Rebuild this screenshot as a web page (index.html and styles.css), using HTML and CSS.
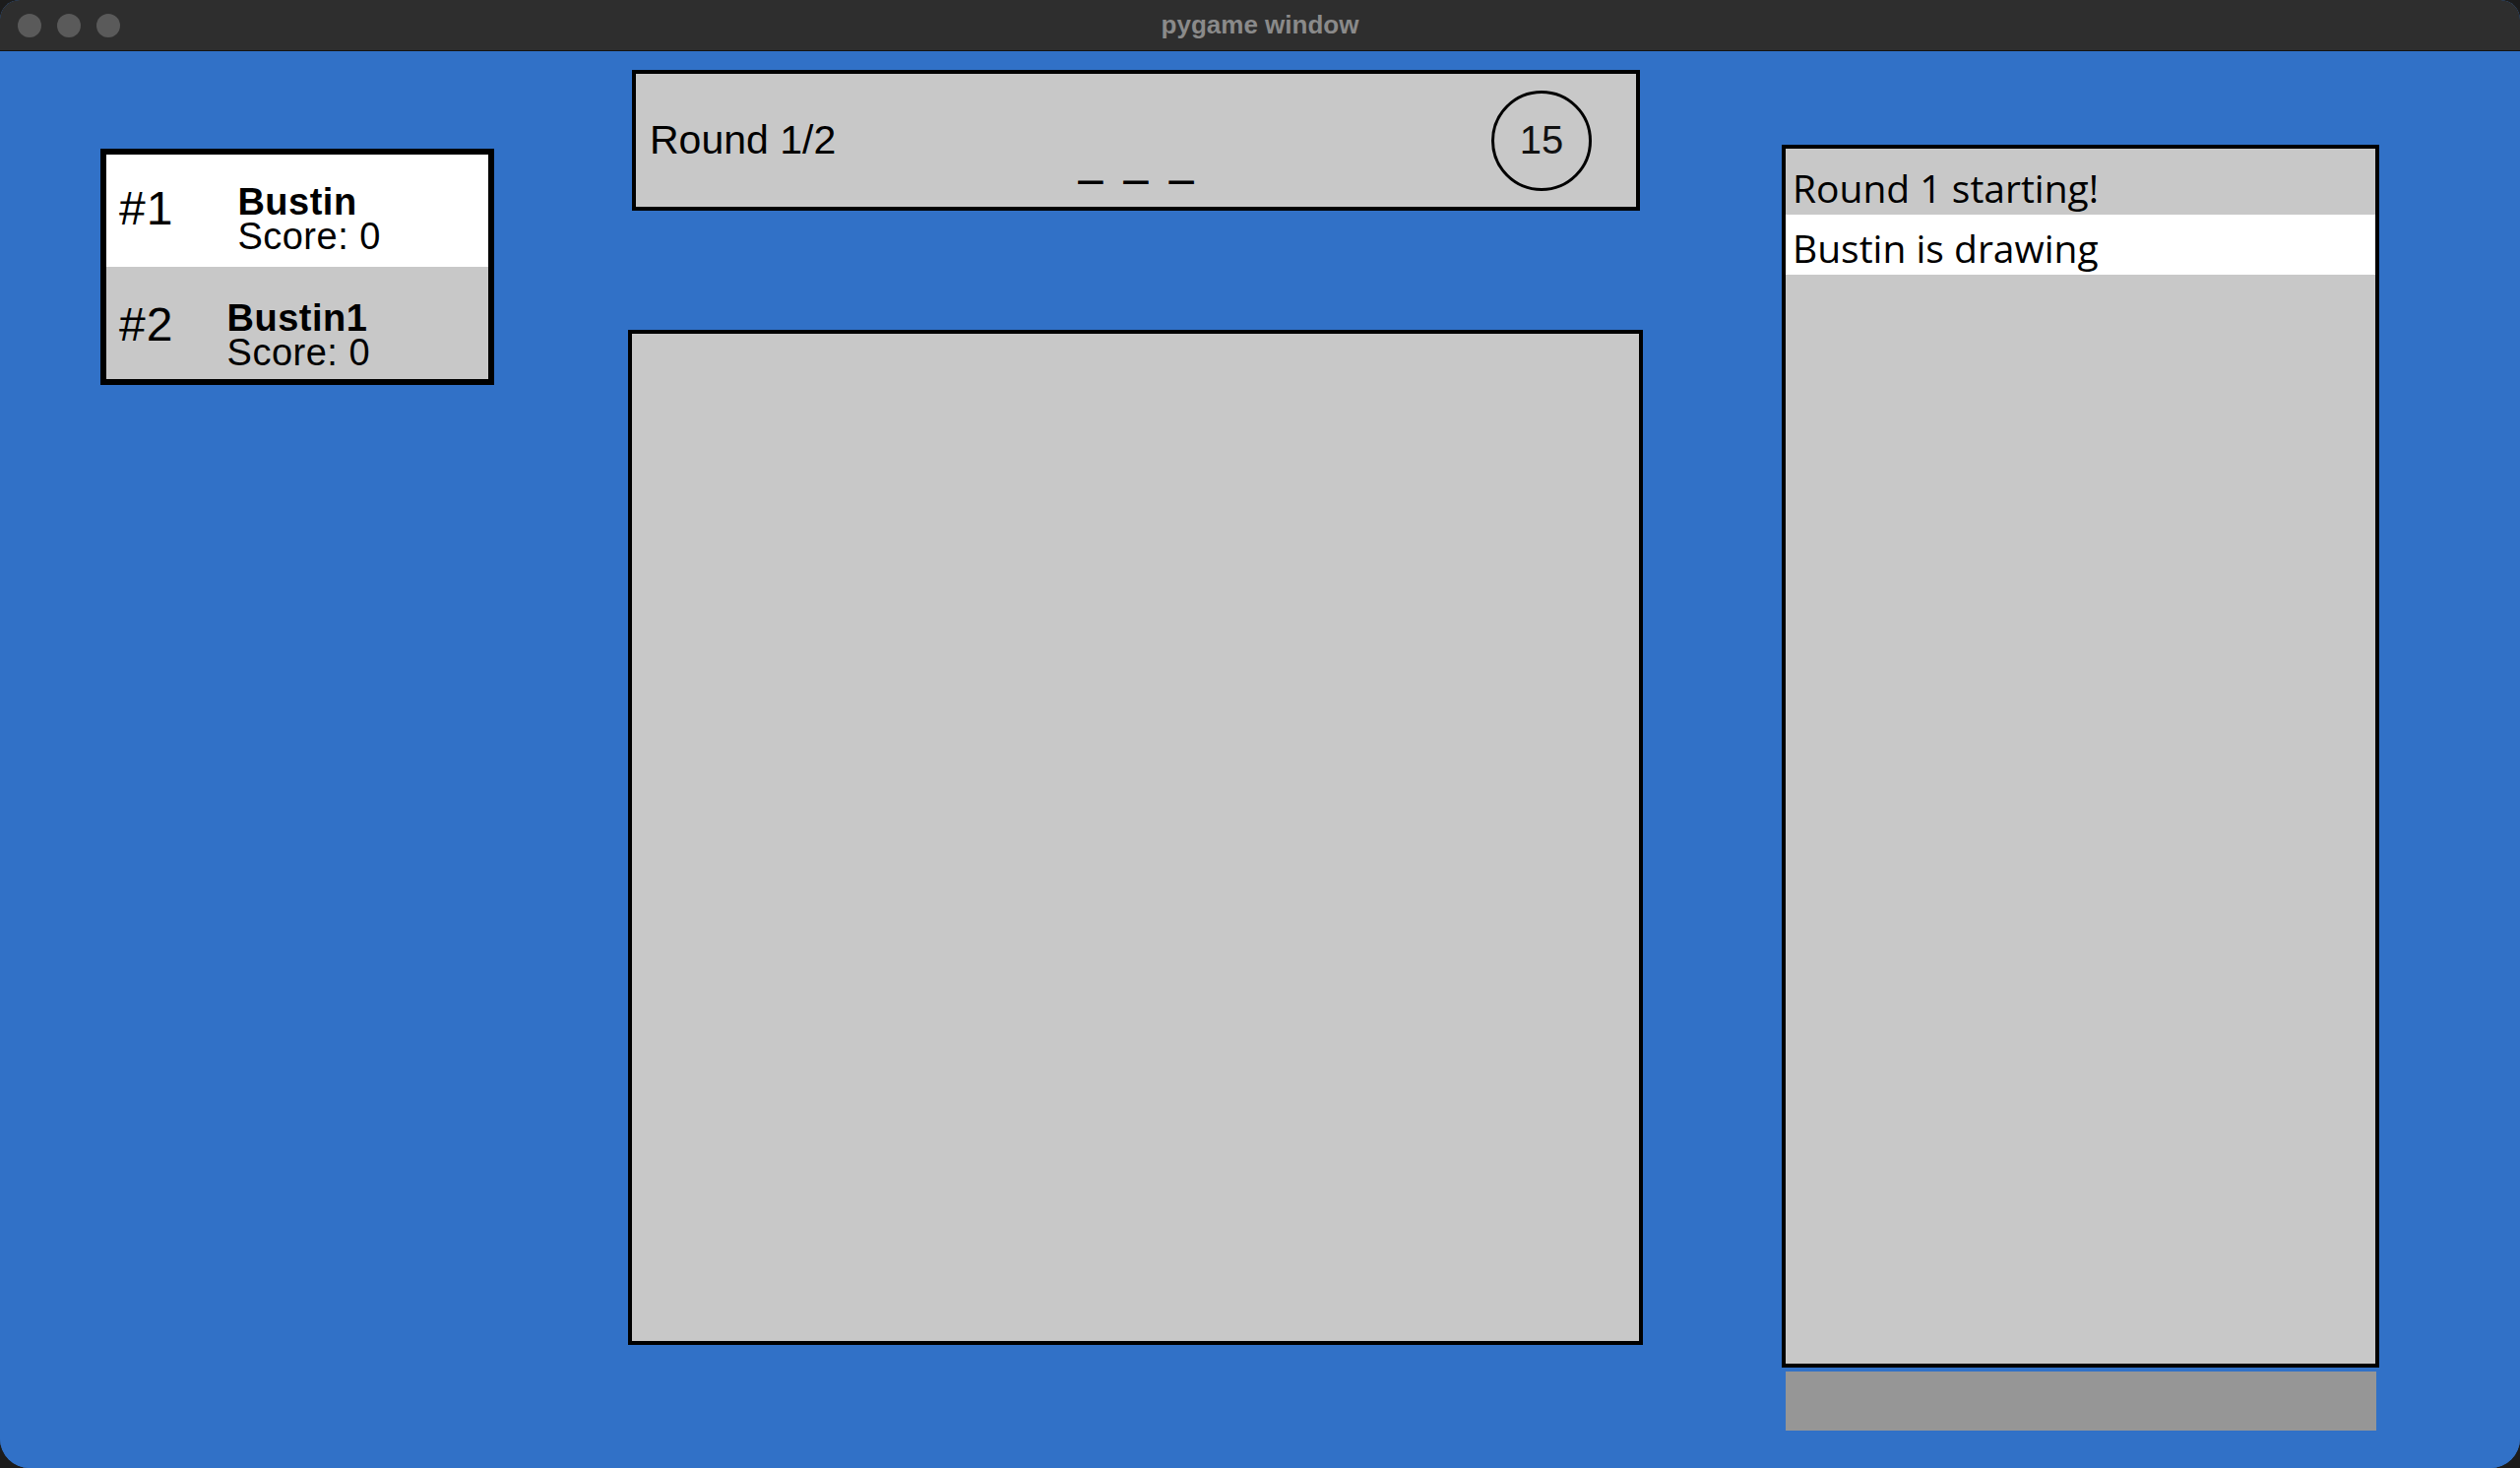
FILE: index.html
```html
<!DOCTYPE html>
<html lang="en">
<head>
<meta charset="utf-8">
<title>pygame window</title>
<link rel="stylesheet" href="styles.css">
</head>
<body>
<div class="window">
  <header class="titlebar">
    <div class="lights">
      <span class="light"></span>
      <span class="light"></span>
      <span class="light"></span>
    </div>
    <div class="title">pygame window</div>
  </header>
  <main class="content">
    <section class="leaderboard">
      <div class="player">
        <div class="rank">#1</div>
        <div class="name">Bustin</div>
        <div class="score">Score: 0</div>
      </div>
      <div class="player alt">
        <div class="rank">#2</div>
        <div class="name">Bustin1</div>
        <div class="score">Score: 0</div>
      </div>
    </section>
    <section class="center">
      <div class="topbar">
        <div class="round">Round 1/2</div>
        <div class="word">_ _ _</div>
        <div class="timer">15</div>
      </div>
      <div class="canvas"></div>
    </section>
    <section class="side">
      <div class="chat">
        <div class="msg">Round 1 starting!</div>
        <div class="msg hl">Bustin is drawing</div>
      </div>
      <div class="input"></div>
    </section>
  </main>
</div>
</body>
</html>
```

FILE: styles.css
```css
* { box-sizing: border-box; }
html, body { margin: 0; padding: 0; }
body {
  background: #1c1c1c;
  width: 2560px;
  height: 1491px;
  overflow: hidden;
  font-family: "Liberation Sans", Arial, sans-serif;
}
.window {
  width: 2560px;
  height: 1491px;
  display: flex;
  flex-direction: column;
  border-radius: 20px 20px 30px 30px;
  overflow: hidden;
  background: #3171c7;
}
.titlebar {
  height: 52px;
  flex: none;
  background: #2e2e2e;
  border-bottom: 1px solid #141414;
  display: grid;
  grid-template-columns: 1fr auto 1fr;
  align-items: center;
}
.lights {
  display: flex;
  gap: 16px;
  padding-left: 18px;
}
.light {
  width: 24px;
  height: 24px;
  border-radius: 50%;
  background: #5a5a5a;
}
.title {
  font-family: "Liberation Sans", Arial, sans-serif;
  font-weight: bold;
  font-size: 26px;
  color: #8a8a8a;
}
.content {
  flex: 1;
  background: #3171c7;
  display: flex;
  align-items: flex-start;
}

/* leaderboard */
.leaderboard {
  margin-left: 102px;
  margin-top: 99px;
  width: 400px;
  height: 240px;
  border: 6px solid #000;
  background: #fff;
  flex: none;
}
.player {
  height: 114px;
  background: #fff;
  padding-top: 31px;
  display: grid;
  grid-template-columns: 1fr auto 1fr;
  grid-template-rows: auto auto;
  align-content: start;
  color: #000;
}
.player.alt {
  background: #c8c8c8;
  padding-top: 35px;
}
.rank {
  grid-column: 1;
  grid-row: 1 / 3;
  justify-self: start;
  align-self: start;
  padding-left: 13px;
  font-size: 48px;
  line-height: 48px;
  letter-spacing: 1px;
}
.name {
  grid-column: 2;
  grid-row: 1;
  font-weight: bold;
  font-size: 38px;
  line-height: 35px;
  white-space: nowrap;
  letter-spacing: 0.5px;
}
.score {
  grid-column: 2 / 4;
  grid-row: 2;
  justify-self: start;
  font-size: 38px;
  line-height: 35px;
  white-space: nowrap;
  letter-spacing: 0.5px;
}

/* center */
.center {
  margin-left: 136px;
  width: 1031px;
  flex: none;
  display: flex;
  flex-direction: column;
}
.topbar {
  margin-left: 4px;
  margin-top: 19px;
  width: 1024px;
  height: 143px;
  border: 4px solid #000;
  background: #c8c8c8;
  display: grid;
  grid-template-columns: 1fr auto 1fr;
  align-items: center;
}
.round {
  justify-self: start;
  padding-left: 14px;
  font-size: 41px;
  color: #000;
}
.word {
  align-self: end;
  margin-bottom: 22px;
  padding-left: 6px;
  font-weight: bold;
  font-size: 41px;
  line-height: 41px;
  letter-spacing: 6px;
  white-space: pre;
  color: #000;
  -webkit-text-stroke: 2px #000;
}
.timer {
  justify-self: end;
  margin-right: 45px;
  width: 102px;
  height: 102px;
  border: 3px solid #000;
  border-radius: 50%;
  display: flex;
  align-items: center;
  justify-content: center;
  font-size: 40px;
  color: #111;
}
.canvas {
  margin-top: 121px;
  width: 1031px;
  height: 1031px;
  border: 4px solid #000;
  background: #c8c8c8;
}

/* chat */
.side {
  margin-left: 141px;
  margin-top: 95px;
  width: 607px;
  flex: none;
}
.chat {
  height: 1242px;
  border: 4px solid #000;
  background: #c8c8c8;
  padding-top: 6px;
}
.msg {
  height: 61px;
  padding-top: 6px;
  padding-left: 7px;
  font-family: "Comic Sans MS", "Open Sans", sans-serif;
  font-size: 39px;
  line-height: 55px;
  color: #000;
  white-space: nowrap;
}
.msg.hl { background: #fff; }
.input {
  margin: 4px 0 0 4px;
  width: 600px;
  height: 60px;
  background: #969696;
}
```
